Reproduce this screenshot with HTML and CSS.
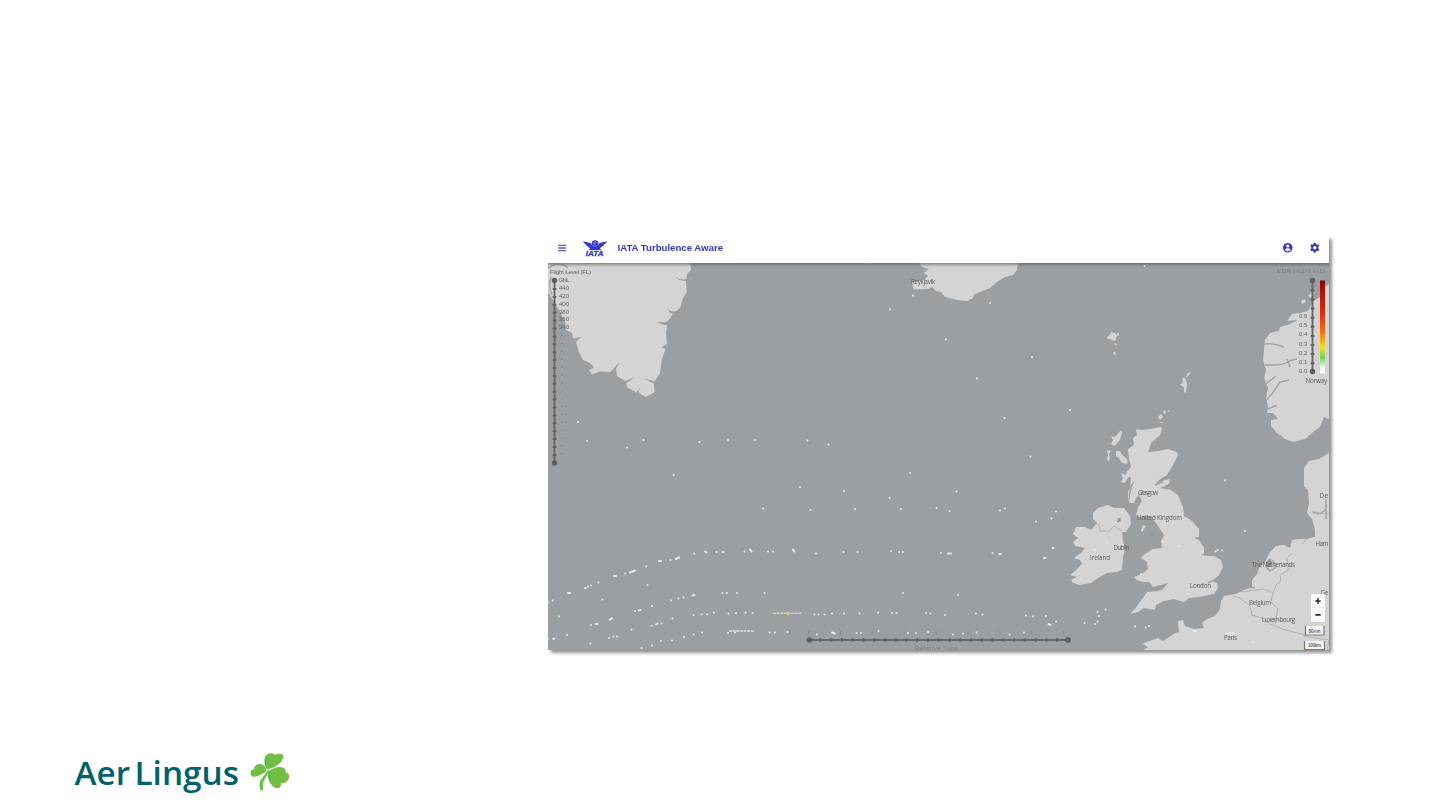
FILE: index.html
```html
<!DOCTYPE html>
<html lang="en">
<head>
<meta charset="utf-8">
<title>IATA Turbulence Aware</title>
<link rel="stylesheet" href="styles.css">
</head>
<body>
<main class="slide">
  <section class="app">
    <header class="bar">
      <svg class="menu" viewBox="0 0 10 8"><path d="M1 1.3h8M1 4h8M1 6.7h8"/></svg>
      <svg class="iata" viewBox="0 0 24 17">
        <circle cx="12" cy="3.700" r="3.500"/>
        <path d="M0 1.500C3 2 6 2.300 8 3.600C9 7.200 15 7.200 16 3.600C18 2.300 21 2 24 1.500C23.400 3.200 22.500 3.800 21 4.200C21.300 5.300 20.500 6 19.200 6.100C19.200 7.400 17.800 8 16.600 7.900L18.500 10H5.500L7.400 7.900C6.200 8 4.800 7.400 4.800 6.100C3.500 6 2.700 5.300 3 4.200C1.500 3.800.6 3.200 0 1.500Z"/>
        <path class="globe" d="M9.300 3h5.400M12 .7v5M8.200 4.200q3.800 4.600 7.600 0"/>
        <text x="2.700" y="16.300" textLength="18" lengthAdjust="spacingAndGlyphs">IATA</text>
      </svg>
      <h1>IATA Turbulence Aware</h1>
      <svg class="account" viewBox="0 0 24 24"><path d="M12 2a10 10 0 1 0 0 20 10 10 0 0 0 0-20zm0 3a3.300 3.300 0 1 1 0 6.600A3.300 3.300 0 0 1 12 5zm0 14.200a7.200 7.200 0 0 1-6-3.200c0-2 4-3.100 6-3.100s6 1.100 6 3.100a7.200 7.200 0 0 1-6 3.200z"/></svg>
      <svg class="gear" viewBox="0 0 24 24"><path fill-rule="evenodd" d="M9.600 2h4.800l.5 2.700 1.600.9 2.600-1 2.300 4-2.100 1.800v3.200l2.100 1.800-2.300 4-2.600-1-1.600.9-.5 2.700H9.600l-.5-2.700-1.600-.9-2.600 1-2.300-4 2.100-1.800v-3.200L2.600 8.600l2.300-4 2.600 1 1.600-.9zM12 8.400a3.600 3.600 0 1 0 0 7.200 3.600 3.600 0 0 0 0-7.200z"/></svg>
    </header>
    <svg class="map" viewBox="548 263 781 387" preserveAspectRatio="none">
      <defs>
        <linearGradient id="edr" x1="0" y1="0" x2="0" y2="1">
          <stop offset="0" stop-color="#7d0a06"/><stop offset=".12" stop-color="#b01208"/><stop offset=".35" stop-color="#e02c0c"/>
          <stop offset=".55" stop-color="#f0700f"/><stop offset=".72" stop-color="#f3e01c"/><stop offset=".83" stop-color="#6ed65a"/>
          <stop offset=".93" stop-color="#eef5ec"/><stop offset="1" stop-color="#fff"/>
        </linearGradient>
        <linearGradient id="topshade" x1="0" y1="0" x2="0" y2="1"><stop offset="0" stop-color="#555" stop-opacity=".65"/><stop offset="1" stop-color="#666" stop-opacity="0"/></linearGradient>
      </defs>
      <g class="land">
        <!-- Greenland -->
        <path d="M548 263H690.500L691 270 687 274 686.500 279Q681 281 674.500 276.500Q679 281 686 281L686.700 292 682.700 299 680 308 675 311.500Q670 312 667.700 308.500Q669 313 673 314L668 321Q664 323 657 322Q661 325 667 325L666 333 667 344 661.500 347.500 665.500 349 661.700 360 660 373 655 381Q649 380 644.500 378.500Q650 382 654 383.500L654.500 392 650 395 646 397 640 394 638.500 391 641 387 636 392.500 627 387 626 383Q631 381 634 377Q629 380 625 381L617 376 616 369 619.500 362.500 610 372 600 371.500 592 374.500 589 370.500 594 367.500 590 363 583 360 579 352 576 342Q578 339 582 337L573 338.500 572 333 566 330 565 322 560 312 553 300 548 292Z"/>
        <!-- Iceland -->
        <path d="M919 263H1018L1017 270 1013 275 1005 277 997 282 990 288 981 291.500 974 294.500 973 298 967 301 957 300 945 297 941 292 936 291 932 287 929 289 913.500 289.500 912 282 918 281 924 280 928 276 924 273 929 269 922 267Z"/>
        <!-- Faroe, Shetland and Orkney -->
        <path d="M1107 337l3-2 1-3 4 1 1 2 3-3 0 3-3 2 0 3-3 1-2-2-3 0zM1114 343l3 1-2 2zM1113.500 352l2 0 0 3-2-1zM1182 378l3 0 2 5-1 10-2-1v-5l-4-2 3-3zM1187 374l4-3-1 3-4 4zM1158 417l3-3 2 3-3 3zM1163 411l2-1 1 3-2 1zM1167 411l3-1-1 2zM1159 422h5l-3 1z"/>
        <!-- Hebrides -->
        <path d="M1121 430l1 3-2 7-6 6-3-2 2-4-2-4 4 1zM1107 450l4 1-2 3 1 4-2 4-1-4 1-3zM1116 451l4 0 2 4 4 3 2 4-2 2-5-2-2-4-3-2zM1121 473l5 2 1-4 3-1 1 5-4 4-2 4-4-1 2-3z"/>
        <!-- Great Britain -->
        <path d="M1136 429L1141 430 1150 429 1161 427 1162 429 1160 435 1151 443 1149 450 1148 452 1158 451 1168 449 1177 452 1178 455 1172 467 1167 475 1159 480 1155 484 1165 480 1170 479 1169 484 1160 488 1171 490 1178 495 1183 507 1184 516 1191 520 1199 529 1199 537 1194 538 1199 540 1204 548 1204 554 1201 555 1208 556 1214 556 1221 560 1223 567 1219 575 1212 581 1217 583 1218 588 1214 594 1199 597 1189 598 1184 602 1174 599 1164 601 1156 605 1155 610 1144 608 1138 612 1130 614 1135 609 1142 599 1147 592 1157 591 1162 590 1168 583 1161 585 1153 587 1149 582 1142 582 1137 580 1134 577 1142 574 1148 569 1147 562 1141 558 1145 554 1153 549 1162 548 1161 541 1164 535 1160 529 1156 523 1150 516 1140 517 1136 515 1138 507 1142 501 1139 495 1136 498 1134 503 1129 503 1130 495 1132 487 1135 480 1131 485 1128 492 1128 502 1130 487 1131 478 1127 474 1131 466 1129 459 1128 449 1134 445 1133 438 1137 435ZM1143 525l3 1-4 6-1-2z"/>
        <!-- Ireland -->
        <path d="M1093 513L1098 508 1108 505 1114 508 1124 508 1130 516 1131 524 1126 532 1122 532 1123 541 1125 549 1123 557 1122 570 1117 572 1107 573 1098 578 1091 583 1080 585 1073 583 1071 580 1077 577 1070 575 1075 571 1082 564 1080 560 1074 558 1081 553 1085 548 1075 546 1073 542 1078 538 1073 534 1076 527 1085 527 1091 530 1097 523 1093 519Z"/>
        <!-- Norway -->
        <path d="M1329 284L1321 290 1320 297 1313 301 1308 311 1300 313 1292 314 1287 321 1298 320 1290 324 1280 327 1279 331 1270 333 1265 340 1264 350 1263 360 1266 370 1264 378 1268 388 1266 398 1268 407 1267 413 1273 413 1278 419 1271 420 1271 426 1277 433 1285 439 1293 442 1305 439 1313 432 1320 427 1324 417 1329 419ZM1301 301l4-2 1 3-4 2zM1308 295l7-3-5 6z"/>
        <!-- Denmark and the continent -->
        <path d="M1329 453L1319 459 1309 461 1304 468 1304 486 1308 490 1309 503 1307 513 1312 519 1315 530 1315 537 1306 539 1299 539 1292 540 1290 548 1284 545 1276 546 1270 552 1265 562 1259 568 1257 574 1252 580 1252 587 1244 590 1236 594 1224 596 1221 601 1220 609 1215 616 1207 619 1202 623 1204 628 1194 629 1185 626 1183 620 1178 621 1179 632 1175 633 1163 641 1158 638 1142 644 1148 647 1143 650H1329Z"/>
      </g>
      <path class="water" d="M1264 344q10-1 20 3M1265 365h10q8 0 13-3t9-3M1287 359l3 8M1266 401l8-10 6-9 9-2M1268 409l9-4M1266 384l10-8M1266 567l4-8 4 3 1 6-5 3zM1247 586l8 2M1214 580l-6 3M1155 485l8-3M1326 499v20M1320 514l6-5M1313 512l6 2M548 268l8-4 8 1 4 3M551 277q-3 10 1 18"/>
      <path class="border" d="M1093 521l6 4 1 6 9 0 5-5 8 5M1233 596l7 2 10 8 2 9 13 4 1 3 16 7 24 6M1240 592l9-1 15-2 9 4 3-8 5-4-1-6 8-5-1-12 4-4M1273 593l-2 9 7 7-3 15M1303 636l26 4-2 10M1311 512l18 2M1306 539l-4 5"/>
      <path class="lake" d="M1117.500 518.500l3-1v4l-3 1zM1266 562l3-3 3 3-1 5-4 0z"/>

      <g class="place">
        <text x="911" y="283.500" textLength="24">Reykjavik</text>
        <text x="1305.500" y="382.500" textLength="21.500">Norway</text>
        <text x="1138" y="495" textLength="20">Glasgow</text>
        <text x="1137" y="520" textLength="45">United Kingdom</text>
        <text x="1113.500" y="549.500" textLength="16">Dublin</text>
        <text x="1090" y="559.500" textLength="20">Ireland</text>
        <text x="1190" y="588" textLength="21">London</text>
        <text x="1252" y="567" textLength="43">The Netherlands</text>
        <text x="1249" y="605" textLength="22">Belgium</text>
        <text x="1262" y="621.500" textLength="33">Luxembourg</text>
        <text x="1224" y="640" textLength="13">Paris</text>
        <text x="1319.500" y="498" textLength="8.500">De</text>
        <text x="1315.500" y="546" textLength="13">Ham</text>
        <text x="1320.500" y="595" textLength="8">Ge</text>
      </g>

      <!-- Aircraft reports -->
      <path class="reports" d="M578 422h0M587 441h0M627 447.500h0M643.500 440h0M699.500 442h0M728 440h0M755 440h0M673.500 475h0M763 508.500h0M800 487h0M807.500 440.500h0M828.500 444.500h0M910 473h0M1004.500 418h0M1070 410h0M1030.500 456.500h0M844 491h0M889.500 498h0M956.500 491.500h0M810.500 510h0M855 509h0M901 509h0M936.500 508h0M949.500 511h0M1000 510.500h0M1005 508.500h0M1036 521.500h0M1051.500 518.500h0M1056 511.500h0M890 309.500h0M913 295.500h0M990 303h0M946 339.500h0M1032 357h0M977 378.500h0M1225 480.500h0M1245 531h0M1144.500 266h0M866 263h0"/>
      <path class="reports" d="M548 602h0M552.500 600.500h0M568 593h2M585 588h1M588 586.500h0M591 585.500h0M598.500 582.500h0M614 576h2M625 573.500h0M630 572.500l5-2M646 566.500h0M659 561h2M670.500 560h0M676 559l3-1.500M694 553.500h0M705 551.500l1.500 1M716.500 552h0M722.500 552h1M744.500 551.500h0M750 549.500l1.500 2M768 551.500h0M773 551.500h0M793 549.500l1.500 2M816 553.500h0M843.500 552h0M857.500 552h0M891 551h0M899 552h0M903 552h0M941 553h0M948 553.500h3M992.500 553h0M999 554h2M1044 558h1.500M1052.500 548h1"/>
      <path class="reports" d="M559 616.500h0M602.500 599.500h0M647.500 585h0M591 625h0M595.500 624h2M610 619.500l2-1M635 611h0M639 610.500l1.500-.5M652 606h0M671 600.500h0M678.500 598.500h0M683.500 597.500h0M692.500 595.500l2-.5M722.500 593h0M727 593h0M737 593h0M764.500 593h0M903 593h0M958 595h0M548 639h0M553.500 639l1-.5M567 635h0M590.500 643.500h0M609 638h0M613.500 636.500h0M617 636.500h0M631.500 629.500h0M651.500 626h0M656 624.500l1.500-1M661.500 623.500h0M672.500 618.500h0M693.500 615h0M701.500 614.500h0M707 614.500h0M714 612.500h0M728.500 613.500h0M736 613h0M745.500 612.500h0M752.500 613h0M641.500 648h0M652 645.500h0M661 641h0M672 640.500h0M684 637h0M693.500 634.500h0M702 632.500h0M728 633h0M735 632.500h0M769.500 632.500h0M775 632.500h0M787.500 632h0M814.500 614.500h0M818.500 614.500h0M824.500 614.500h0M832 613.500h0M844 613.500h0M859.500 613.500h0M878 612.500h0M892 613h0M896.500 613h0M926 613h0M930.500 613.500h0M945 615h0M976 613.500h0M982.500 614.500h0M1026 615.500h0M1033 616.500h0M1046 616h0M1048.500 624l2 1M1056 621.500h0M817 634.500h0M832 632.500l3 1M856.500 633h0M861 633h0M878.500 631h0M908 633h0M916 633h0M928 632h0M953 634.500h0M963 633.500h0M976.500 632.500h0M1009.500 634.500h0M1024 632.500h0M1084.500 623h0M1095 624h0M1097.500 612h0M1099 616h0M1105.500 609.500h0M1097.500 621.500h0M1135 626.500h0M1145.500 627.500h0M1149 626h0M1215.500 551.500h0M1217.500 550h0M1222 550.500h0M1081 528h0M1107 542.500h0M1095 550h0M1179 546h0M1141 574h0M1203 551h0M1163 542h0M1193 631h3M1226 633.500h8M1253 642h0"/>
      <path class="trail" d="M729 631H754"/>
      <path class="trail warm" d="M773 613.300H802"/>
      <rect class="amber" x="787" y="612" width="2" height="3"/>

      <!-- Flight level slider -->
      <g class="tiny">
        <text x="550" y="273.500" textLength="41">Flight Level (FL)</text>
        <text x="558.500" y="281.700" textLength="11">GNL</text><text x="559" y="289.500">440</text><text x="559" y="297.500">420</text><text x="559" y="305.500">400</text><text x="559" y="313.500">380</text><text x="559" y="321">360</text><text x="559" y="329">340</text>
      </g>
      <path class="ghost" d="M562 335V461M566 406V424"/>
      <path class="rail" d="M554.500 281V463"/>
      <path class="ticks" d="M554.500 288V460"/>
      <circle class="knob" cx="554.500" cy="280.500" r="2.700"/><circle class="knob" cx="554.500" cy="463" r="2.700"/>

      <!-- EDR scale -->
      <g class="tiny">
        <text class="faint" x="1277" y="272.500" textLength="48">EDR (m2/3 s-1)</text>
        <text x="1299" y="318">0.6</text><text x="1299" y="327.200">0.5</text><text x="1299" y="336.300">0.4</text><text x="1299" y="345.500">0.3</text><text x="1299" y="354.700">0.2</text><text x="1299" y="363.800">0.1</text><text x="1299" y="373">0.0</text>
      </g>
      <path class="rail" d="M1312.500 281V371"/>
      <path class="ticks edr" d="M1312.500 289.400V367"/>
      <circle class="knob" cx="1312.500" cy="280.500" r="2.700"/><circle class="knob" cx="1312.500" cy="371.500" r="2.700"/>
      <rect x="1320" y="280.500" width="5" height="93" fill="url(#edr)"/>

      <!-- Time slider -->
      <path class="ghost time-marks" d="M808 632.500H1066"/>
      <path class="rail" d="M810 640H1068"/>
      <path class="ticks time" d="M819.500 640H1062"/>
      <circle class="knob" cx="809.500" cy="640" r="2.800"/><circle class="knob" cx="1068" cy="640" r="2.800"/>
      <g class="tiny"><text class="faint" x="915" y="649.500" textLength="43">Relative Time</text></g>

      <!-- Zoom and distance controls -->
      <rect x="1311" y="594" width="14" height="28" rx="1.500" fill="#fbfbfb"/>
      <path d="M1311 607.500h14" stroke="#eee" stroke-width=".6"/>
      <path d="M1315.300 601h5.400M1318 598.300v5.400M1315.300 614.800h5.400" stroke="#333" stroke-width="1.700"/>
      <g class="scale">
        <path d="M1305.500 626v9h18.500v-9M1304.500 641v8.500h20V641"/>
        <text x="1308.500" y="632.500" textLength="12">80nm</text><text x="1308" y="647" textLength="13">100km</text>
      </g>
      <rect x="548" y="263" width="781" height="4" fill="url(#topshade)"/>
    </svg>
  </section>
  <footer class="brand">
    <svg class="logo" viewBox="70 745 225 55">
      <defs><linearGradient id="leaf" x1="0" y1="0" x2="1" y2="0"><stop offset="0" stop-color="#35ad4c"/><stop offset=".14" stop-color="#72bf44"/></linearGradient></defs>
      <text x="74.500" y="785" textLength="55.500" lengthAdjust="spacingAndGlyphs">Aer</text>
      <text x="134.500" y="785" textLength="104.500" lengthAdjust="spacingAndGlyphs">Lingus</text>
      <g fill="url(#leaf)">
        <path d="M267 769.500C264 765 263.500 757 267 754.500C270 752.500 273 753 275 755C278 753 282 753.500 283.500 755.500C283.500 762 277 767 267 769.500Z"/>
        <path d="M266.500 771C262 775 256 777.500 252 776.500C249.500 773 251 769.500 254.500 769C253.500 766 257 763.500 260.500 764C264.500 765 266 767 266.500 771Z"/>
        <path d="M268.500 771.500C275 766.500 281 766 284.500 768.500C286 770 286 771.500 285.500 772.500C289 773 290 776 288.500 779C286.500 782.500 284 783.500 281 783C281.500 787.500 278 789.500 274.500 787.500C269.500 784 267 778 268.500 771.500Z"/>
        <path d="M268 770C265 775 261 778 260 782Q259 786 260.500 790.500L263.500 789.500Q262 784 264.500 780Q267 776 269.500 770Z"/>
      </g>
    </svg>
  </footer>
</main>
</body>
</html>
```
FILE: styles.css
```css
body { margin: 0; background: #fff; font-family: "Liberation Sans", Arial, sans-serif; }
.slide { box-sizing: border-box; height: 810px; padding-top: 236px; display: flex; flex-direction: column; overflow: hidden; }
.app { width: 781px; margin-left: 548px; flex: none; box-shadow: 3px 3px 3px rgba(0, 0, 0, .42); }
.bar { height: 27px; display: flex; align-items: center; background: #fff; color: #3338c9; box-sizing: border-box; padding: 0 9px 3px 8.500px; }
.bar svg { fill: #3338c9; flex: none; filter: blur(.25px); }
.menu { width: 10px; height: 8px; }
.bar .menu { stroke: #5b5fce; stroke-width: 1.3; }
.iata { width: 24px; height: 17px; margin-left: 16px; }
.iata text { font: italic bold 7.5px "Liberation Sans", Arial, sans-serif; stroke: #3338c9; stroke-width: .3; }
.iata .globe { fill: none; stroke: #a5a9ec; stroke-width: .5; }
.bar h1 { margin: 0 auto 0 11px; font-size: 9.65px; line-height: 12px; font-weight: bold; white-space: nowrap; filter: blur(.25px); }
.account { width: 11.5px; height: 11.5px; margin-right: 15px; }
.gear { width: 11.5px; height: 11.5px; }
.map { display: block; width: 781px; height: 387px; background: #9b9fa2; }
.land { fill: #d4d4d4; filter: blur(.4px); }
.water, .border, .ghost, .rail, .ticks, .trail, .scale path { fill: none; }
.water { stroke: #a0a3a5; stroke-width: 1.4; }
.border { stroke: #aaaaac; stroke-width: .8; }
.lake { fill: #94979a; }
.place { font: 6.2px "Open Sans", "Noto Sans", sans-serif; fill: #5c5c60; filter: blur(.3px); }
.tiny { font: 6px "Liberation Sans", Arial, sans-serif; fill: #626266; filter: blur(.3px); }
.faint { opacity: .6; }
.reports { fill: none; stroke: #e5e8e8; stroke-width: 2; stroke-linecap: round; filter: blur(.25px); }
.trail { stroke: #e0e3e1; stroke-width: 1.6; stroke-dasharray: 3 .6; }
.warm { stroke: #cfd1bb; }
.amber { fill: #cfcf7c; }
.ghost { stroke: #808387; stroke-width: 1.5; stroke-dasharray: 1 6.9; }
.time-marks { stroke-width: 3; stroke-dasharray: 1 30.9; }
.rail { stroke: #66686a; stroke-width: 1.9; }
.ticks { stroke: #5d5f62; stroke-width: 3.6; stroke-dasharray: 2 5.9; filter: blur(.3px); }
.edr { stroke-dasharray: 2 7.1; }
.time { stroke-dasharray: 2 8.75; }
.knob { fill: #5c5e60; }
.scale { font: bold 4.5px "Liberation Sans", Arial, sans-serif; fill: #666; }
.scale path { fill: #f4f4f4; stroke: #77797b; stroke-width: 1.2; }
.brand { margin: auto 0 10px 70px; height: 55px; }
.logo { display: block; width: 225px; height: 55px; }
.logo text { font: 600 32px "Open Sans", "Noto Sans", sans-serif; fill: #00616a; }
```
